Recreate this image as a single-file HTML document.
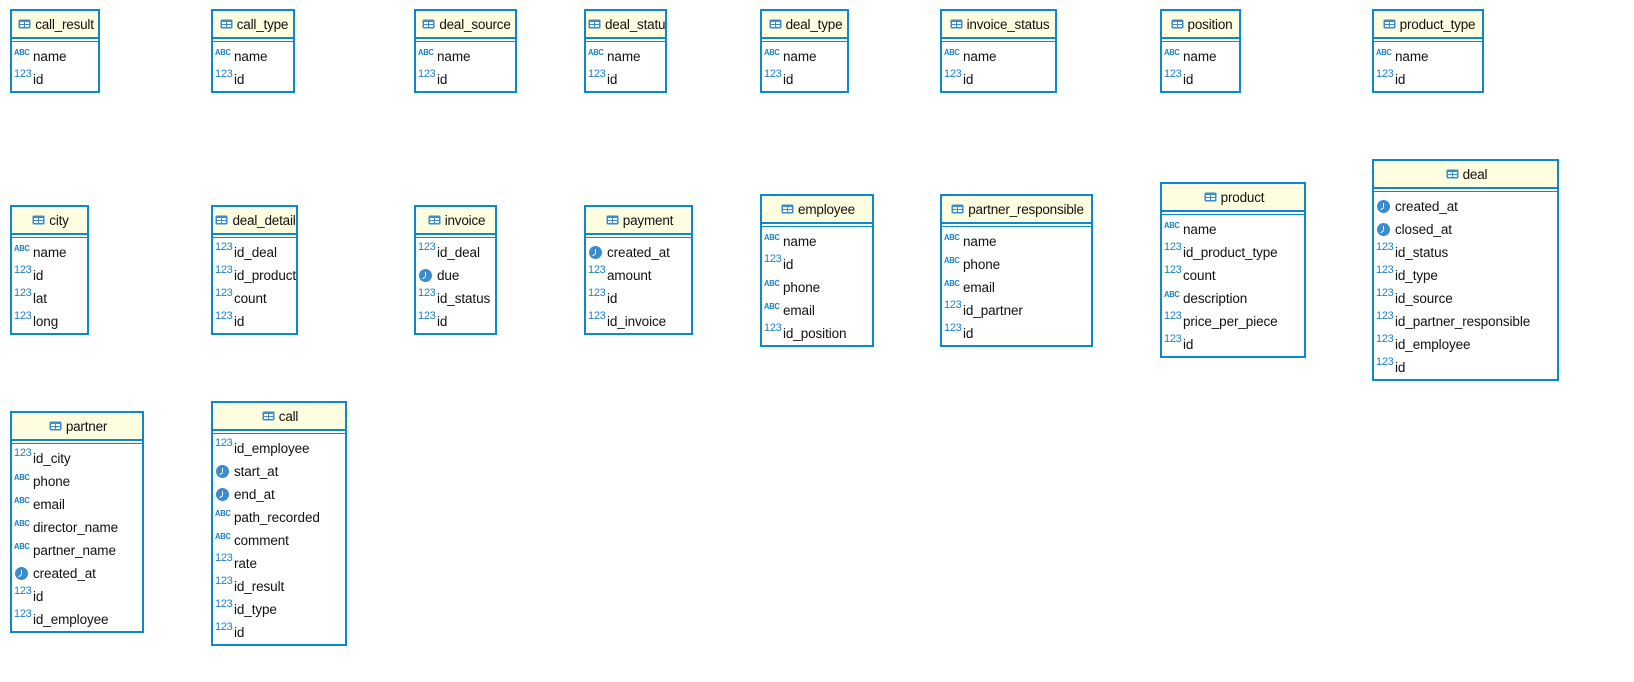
<!DOCTYPE html>
<html><head><meta charset="utf-8"><style>
body{margin:0;width:1634px;height:682px;background:#fff;position:relative;overflow:hidden;font-family:"Liberation Sans",sans-serif;font-size:13.5px;color:#111;}
.t{position:absolute;border:2px solid #0b88cf;background:#fff;box-sizing:border-box;}
.h{height:26px;background:#fffde0;border-bottom:2px solid #0b88cf;display:flex;align-items:center;justify-content:safe center;white-space:nowrap;overflow:hidden;font-size:13.5px;letter-spacing:-0.2px;padding-left:2px}
.h svg{margin-right:4px;flex:none}
.sep{height:2px;border-bottom:1px solid #0b88cf;margin-bottom:3px}
.r{height:23px;line-height:23px;white-space:nowrap;position:relative;padding-left:21px;overflow:hidden;letter-spacing:-0.1px}
.r i{position:absolute;left:2px;font-style:normal;color:#1a7fc8}
.a{font-size:8px;font-weight:bold;top:-4px;letter-spacing:-0.3px;transform:scaleX(0.95);transform-origin:left}
.n{font-size:11px;top:-5px;letter-spacing:-0.3px}
.c{width:13px;height:13px;border-radius:50%;background:#3a8ccc;top:5px;left:3px!important}
.c:before{content:"";position:absolute;left:6px;top:3px;width:1.3px;height:4px;background:#fff}
.c:after{content:"";position:absolute;left:3px;top:7px;width:4px;height:1.3px;background:#fff;transform:rotate(-35deg);transform-origin:right}
</style></head><body>
<svg width="0" height="0" style="position:absolute"><defs><symbol id="tb" viewBox="0 0 13 10"><rect x="0.5" y="0.5" width="12" height="9" rx="1.5" fill="#3a8ccc"/><rect x="2" y="3" width="4" height="2" fill="#fff"/><rect x="7" y="3" width="4" height="2" fill="#fff"/><rect x="2" y="6" width="4" height="2" fill="#fff"/><rect x="7" y="6" width="4" height="2" fill="#fff"/></symbol></defs></svg>

<div class="t" style="left:10px;top:9px;width:90px"><div class="h"><svg width="13" height="10"><use href="#tb"/></svg>call_result</div><div class="sep"></div><div class="r"><i class="a">ABC</i>name</div><div class="r"><i class="n">123</i>id</div></div>
<div class="t" style="left:211px;top:9px;width:84px"><div class="h"><svg width="13" height="10"><use href="#tb"/></svg>call_type</div><div class="sep"></div><div class="r"><i class="a">ABC</i>name</div><div class="r"><i class="n">123</i>id</div></div>
<div class="t" style="left:414px;top:9px;width:103px"><div class="h"><svg width="13" height="10"><use href="#tb"/></svg>deal_source</div><div class="sep"></div><div class="r"><i class="a">ABC</i>name</div><div class="r"><i class="n">123</i>id</div></div>
<div class="t" style="left:584px;top:9px;width:83px"><div class="h"><svg width="13" height="10"><use href="#tb"/></svg>deal_status</div><div class="sep"></div><div class="r"><i class="a">ABC</i>name</div><div class="r"><i class="n">123</i>id</div></div>
<div class="t" style="left:760px;top:9px;width:89px"><div class="h"><svg width="13" height="10"><use href="#tb"/></svg>deal_type</div><div class="sep"></div><div class="r"><i class="a">ABC</i>name</div><div class="r"><i class="n">123</i>id</div></div>
<div class="t" style="left:940px;top:9px;width:117px"><div class="h"><svg width="13" height="10"><use href="#tb"/></svg>invoice_status</div><div class="sep"></div><div class="r"><i class="a">ABC</i>name</div><div class="r"><i class="n">123</i>id</div></div>
<div class="t" style="left:1160px;top:9px;width:81px"><div class="h"><svg width="13" height="10"><use href="#tb"/></svg>position</div><div class="sep"></div><div class="r"><i class="a">ABC</i>name</div><div class="r"><i class="n">123</i>id</div></div>
<div class="t" style="left:1372px;top:9px;width:112px"><div class="h"><svg width="13" height="10"><use href="#tb"/></svg>product_type</div><div class="sep"></div><div class="r"><i class="a">ABC</i>name</div><div class="r"><i class="n">123</i>id</div></div>

<div class="t" style="left:10px;top:205px;width:79px"><div class="h"><svg width="13" height="10"><use href="#tb"/></svg>city</div><div class="sep"></div><div class="r"><i class="a">ABC</i>name</div><div class="r"><i class="n">123</i>id</div><div class="r"><i class="n">123</i>lat</div><div class="r"><i class="n">123</i>long</div></div>
<div class="t" style="left:211px;top:205px;width:87px"><div class="h"><svg width="13" height="10"><use href="#tb"/></svg>deal_detail</div><div class="sep"></div><div class="r"><i class="n">123</i>id_deal</div><div class="r"><i class="n">123</i>id_product</div><div class="r"><i class="n">123</i>count</div><div class="r"><i class="n">123</i>id</div></div>
<div class="t" style="left:414px;top:205px;width:83px"><div class="h"><svg width="13" height="10"><use href="#tb"/></svg>invoice</div><div class="sep"></div><div class="r"><i class="n">123</i>id_deal</div><div class="r"><i class="c"></i>due</div><div class="r"><i class="n">123</i>id_status</div><div class="r"><i class="n">123</i>id</div></div>
<div class="t" style="left:584px;top:205px;width:109px"><div class="h"><svg width="13" height="10"><use href="#tb"/></svg>payment</div><div class="sep"></div><div class="r"><i class="c"></i>created_at</div><div class="r"><i class="n">123</i>amount</div><div class="r"><i class="n">123</i>id</div><div class="r"><i class="n">123</i>id_invoice</div></div>
<div class="t" style="left:760px;top:194px;width:114px"><div class="h"><svg width="13" height="10"><use href="#tb"/></svg>employee</div><div class="sep"></div><div class="r"><i class="a">ABC</i>name</div><div class="r"><i class="n">123</i>id</div><div class="r"><i class="a">ABC</i>phone</div><div class="r"><i class="a">ABC</i>email</div><div class="r"><i class="n">123</i>id_position</div></div>
<div class="t" style="left:940px;top:194px;width:153px"><div class="h"><svg width="13" height="10"><use href="#tb"/></svg>partner_responsible</div><div class="sep"></div><div class="r"><i class="a">ABC</i>name</div><div class="r"><i class="a">ABC</i>phone</div><div class="r"><i class="a">ABC</i>email</div><div class="r"><i class="n">123</i>id_partner</div><div class="r"><i class="n">123</i>id</div></div>
<div class="t" style="left:1160px;top:182px;width:146px"><div class="h"><svg width="13" height="10"><use href="#tb"/></svg>product</div><div class="sep"></div><div class="r"><i class="a">ABC</i>name</div><div class="r"><i class="n">123</i>id_product_type</div><div class="r"><i class="n">123</i>count</div><div class="r"><i class="a">ABC</i>description</div><div class="r"><i class="n">123</i>price_per_piece</div><div class="r"><i class="n">123</i>id</div></div>
<div class="t" style="left:1372px;top:159px;width:187px"><div class="h"><svg width="13" height="10"><use href="#tb"/></svg>deal</div><div class="sep"></div><div class="r"><i class="c"></i>created_at</div><div class="r"><i class="c"></i>closed_at</div><div class="r"><i class="n">123</i>id_status</div><div class="r"><i class="n">123</i>id_type</div><div class="r"><i class="n">123</i>id_source</div><div class="r"><i class="n">123</i>id_partner_responsible</div><div class="r"><i class="n">123</i>id_employee</div><div class="r"><i class="n">123</i>id</div></div>

<div class="t" style="left:10px;top:411px;width:134px"><div class="h"><svg width="13" height="10"><use href="#tb"/></svg>partner</div><div class="sep"></div><div class="r"><i class="n">123</i>id_city</div><div class="r"><i class="a">ABC</i>phone</div><div class="r"><i class="a">ABC</i>email</div><div class="r"><i class="a">ABC</i>director_name</div><div class="r"><i class="a">ABC</i>partner_name</div><div class="r"><i class="c"></i>created_at</div><div class="r"><i class="n">123</i>id</div><div class="r"><i class="n">123</i>id_employee</div></div>
<div class="t" style="left:211px;top:401px;width:136px"><div class="h"><svg width="13" height="10"><use href="#tb"/></svg>call</div><div class="sep"></div><div class="r"><i class="n">123</i>id_employee</div><div class="r"><i class="c"></i>start_at</div><div class="r"><i class="c"></i>end_at</div><div class="r"><i class="a">ABC</i>path_recorded</div><div class="r"><i class="a">ABC</i>comment</div><div class="r"><i class="n">123</i>rate</div><div class="r"><i class="n">123</i>id_result</div><div class="r"><i class="n">123</i>id_type</div><div class="r"><i class="n">123</i>id</div></div>
</body></html>
